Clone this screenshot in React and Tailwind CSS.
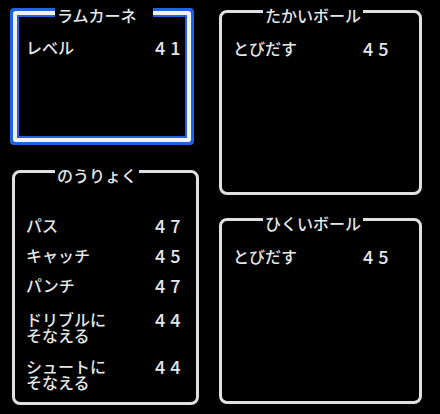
const font = { fontFamily: '"Noto Sans CJK JP", "Noto Sans", sans-serif' };

function Title({ children, className = '' }) {
  return (
    <span
      className={`absolute bg-black px-[2px] text-[16px] leading-[16px] text-[#e6e6e6] whitespace-nowrap ${className}`}
    >
      {children}
    </span>
  );
}

function Value({ children }) {
  return <div className="text-[18px] leading-[16px] tracking-[5px]">{children}</div>;
}

function Row({ label, value, className = '', col = 'grid-cols-[129px_auto]' }) {
  return (
    <div className={`grid ${col} ${className}`}>
      <div>{label}</div>
      <Value>{value}</Value>
    </div>
  );
}

function PlainBox({ title, className = '', titleClass = 'left-[41px]', children }) {
  return (
    <div className={`relative rounded-[8px] border-[3px] border-[#e0e0e0] ${className}`}>
      <Title className={`top-[-6px] ${titleClass}`}>{title}</Title>
      {children}
    </div>
  );
}

export default function App() {
  return (
    <div
      className="flex h-[414px] w-[440px] overflow-hidden bg-black text-[16px] font-medium leading-[16px] text-[#e6e6e6]"
      style={font}
    >
      {/* left column */}
      <div className="flex flex-col items-start pl-[10px] pt-[8px]">
        <div className="relative h-[137px] w-[184px] rounded-[4px] border-[3px] border-[#1f64e0]">
          <div className="h-full w-full rounded-[2px] border-4 border-[#f2f2f2]">
            <div className="h-full w-full border-2 border-[#1f64e0] pl-[7px] pt-[22px]">
              <Row label="レベル" value="41" />
            </div>
          </div>
          <Title className="left-[42px] top-[-4px] w-[98px]">ラムカーネ</Title>
        </div>

        <PlainBox
          title="のうりょく"
          titleClass="left-[40px]"
          className="ml-[2px] mt-[25px] h-[235px] w-[187px] pl-[11px] pt-[44px]"
        >
          <Row label="パス" value="47" />
          <Row label="キャッチ" value="45" className="mt-[14px]" />
          <Row label="パンチ" value="47" className="mt-[14px]" />
          <Row
            label={
              <>
                ドリブルに
                <br />
                そなえる
              </>
            }
            value="44"
            className="mt-[18px]"
          />
          <Row
            label={
              <>
                シュートに
                <br />
                そなえる
              </>
            }
            value="44"
            className="mt-[15px]"
          />
        </PlainBox>
      </div>

      {/* right column */}
      <div className="ml-[20px] flex flex-col pt-[10px]">
        <PlainBox title="たかいボール" className="h-[185px] w-[203px] pl-[11px] pt-[27px]">
          <Row label="とびだす" value="45" col="grid-cols-[130px_auto]" />
        </PlainBox>

        <PlainBox title="ひくいボール" className="mt-[23px] h-[186px] w-[203px] pl-[11px] pt-[27px]">
          <Row label="とびだす" value="45" col="grid-cols-[130px_auto]" />
        </PlainBox>
      </div>
    </div>
  );
}
